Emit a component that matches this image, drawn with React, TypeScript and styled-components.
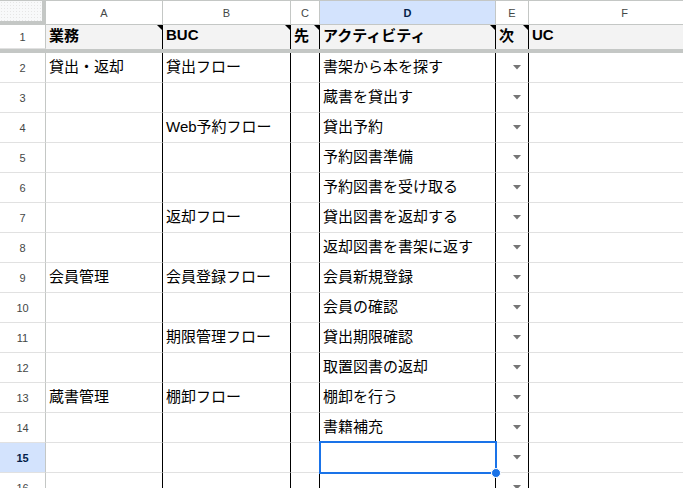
import React from 'react'
import styled, { createGlobalStyle, css } from 'styled-components'

const GlobalStyle = createGlobalStyle`
  html, body {
    margin: 0;
    padding: 0;
    background: #ffffff;
    overflow: hidden;
  }
  body {
    font-family: "Liberation Sans", Arial, "Noto Sans CJK JP", sans-serif;
  }
`

const COLUMNS = ['A', 'B', 'C', 'D', 'E', 'F']
const WIDTHS = [117, 128, 29, 176, 33, 192]

const HEADER_ROW = ['業務', 'BUC', '先', 'アクティビティ', '次', 'UC']

// [A, B, D] per data row, rows 2..16
const ROWS: [string, string, string][] = [
  ['貸出・返却', '貸出フロー', '書架から本を探す'],
  ['', '', '蔵書を貸出す'],
  ['', 'Web予約フロー', '貸出予約'],
  ['', '', '予約図書準備'],
  ['', '', '予約図書を受け取る'],
  ['', '返却フロー', '貸出図書を返却する'],
  ['', '', '返却図書を書架に返す'],
  ['会員管理', '会員登録フロー', '会員新規登録'],
  ['', '', '会員の確認'],
  ['', '期限管理フロー', '貸出期限確認'],
  ['', '', '取置図書の返却'],
  ['蔵書管理', '棚卸フロー', '棚卸を行う'],
  ['', '', '書籍補充'],
  ['', '', ''],
  ['', '', ''],
]

const ACTIVE_COL = 'D'
const ACTIVE_ROW = 15

const Sheet = styled.div`
  display: grid;
  grid-template-columns: 46px ${WIDTHS.map((w) => `${w}px`).join(' ')};
  grid-template-rows: 25px 24px 4px repeat(${ROWS.length}, 30px);
  width: max-content;
`

const Corner = styled.div`
  box-sizing: border-box;
  background-color: #f8f9fa;
  background-image: radial-gradient(#e6e6e6 0.6px, transparent 0.8px);
  background-size: 3px 3px;
  border-top: 1px solid #c4c7c5;
  border-right: 4px solid #c4c7c5;
  border-bottom: 4px solid #c4c7c5;
`

const ColHead = styled.div<{ $active?: boolean }>`
  box-sizing: border-box;
  display: flex;
  align-items: center;
  justify-content: center;
  font-size: 11px;
  color: #444746;
  background: #ffffff;
  border-top: 1px solid #c4c7c5;
  border-right: 1px solid #c4c7c5;
  border-bottom: 1px solid #c4c7c5;
  ${({ $active }) =>
    $active &&
    css`
      background: #d3e3fd;
      color: #041e49;
      font-weight: 700;
    `}
`

const RowHead = styled.div<{ $active?: boolean }>`
  box-sizing: border-box;
  display: flex;
  align-items: center;
  justify-content: center;
  font-size: 11px;
  color: #444746;
  background: #ffffff;
  border-right: 1px solid #c4c7c5;
  border-bottom: 1px solid #e1e1e1;
  ${({ $active }) =>
    $active &&
    css`
      background: #d3e3fd;
      color: #041e49;
      font-weight: 700;
    `}
`

const FreezeBar = styled.div`
  grid-column: 1 / -1;
  background: #c4c7c5;
`

const Cell = styled.div<{ $black?: boolean; $title?: boolean }>`
  box-sizing: border-box;
  position: relative;
  display: flex;
  align-items: center;
  padding: 0 3px 4px;
  font-size: 15px;
  color: #000000;
  white-space: nowrap;
  overflow: visible;
  border-right: 1px solid ${({ $black }) => ($black ? '#000000' : '#e1e1e1')};
  border-bottom: 1px solid #e1e1e1;
  ${({ $title }) =>
    $title &&
    css`
      background: #f3f3f3;
      font-weight: 700;
      border-bottom: none;
      padding-bottom: 5px;
    `}
`

const DropCell = styled(Cell)`
  justify-content: flex-end;
  padding: 0 7px 0 0;
`

const NoteMark = styled.span`
  position: absolute;
  top: 0;
  right: 0;
  width: 0;
  height: 0;
  border-top: 5px solid #000000;
  border-left: 5px solid transparent;
`

const Selection = styled.div`
  position: absolute;
  top: -2px;
  left: -1px;
  right: -2px;
  bottom: -2px;
  border: 2px solid #1a73e8;
  pointer-events: none;
  z-index: 2;
`

const FillHandle = styled.span`
  position: absolute;
  right: -6px;
  bottom: -6px;
  width: 8px;
  height: 8px;
  border-radius: 50%;
  background: #1a73e8;
  border: 1px solid #ffffff;
`

const Arrow = () => (
  <svg width="8" height="5" viewBox="0 0 8 5">
    <polygon points="0,0 8,0 4,4.5" fill="#757575" />
  </svg>
)

export default function App() {
  return (
    <>
      <GlobalStyle />
      <Sheet>
        <Corner />
        {COLUMNS.map((c) => (
          <ColHead key={c} $active={c === ACTIVE_COL}>
            {c}
          </ColHead>
        ))}

        <RowHead>1</RowHead>
        {HEADER_ROW.map((text, i) => (
          <Cell key={i} $title $black={i < 5}>
            {text}
            {i < 5 && <NoteMark />}
          </Cell>
        ))}

        <FreezeBar />

        {ROWS.map(([a, b, d], i) => {
          const rowNo = i + 2
          const active = rowNo === ACTIVE_ROW
          return (
            <React.Fragment key={rowNo}>
              <RowHead $active={active}>{rowNo}</RowHead>
              <Cell $black>{a}</Cell>
              <Cell $black>{b}</Cell>
              <Cell $black />
              <Cell $black>
                {d}
                {active && (
                  <Selection>
                    <FillHandle />
                  </Selection>
                )}
              </Cell>
              <DropCell $black>
                <Arrow />
              </DropCell>
              <Cell />
            </React.Fragment>
          )
        })}
      </Sheet>
    </>
  )
}
